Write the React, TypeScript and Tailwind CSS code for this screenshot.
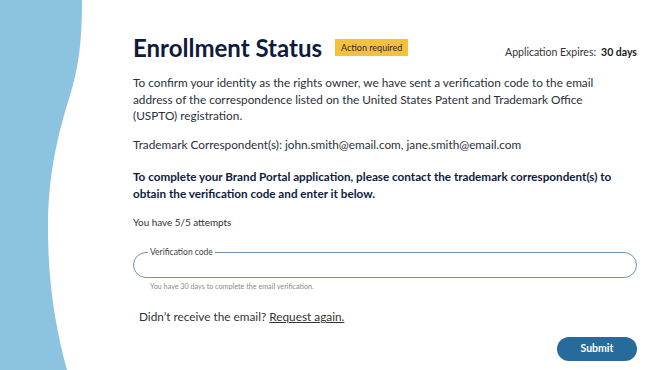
import React from "react";

export default function App() {
  return (
    <div
      className="flex h-[370px] w-[661px] overflow-hidden bg-white text-[#2b2f3a]"
      style={{ fontFamily: "Lato, 'Open Sans', sans-serif" }}
    >
      <svg width="90" height="370" viewBox="0 0 90 370" className="shrink-0">
        <path
          d="M0 0 H82 C82 40 79 65 71 92 C62 122 48 165 48 228 C48 285 56 330 67 370 H0 Z"
          fill="#8cc3e0"
        />
      </svg>
      <main className="flex flex-1 flex-col pl-[43px] pr-[24px] pt-[33px]">
        <div className="flex items-end justify-between">
          <div className="flex items-center gap-[13px]">
            <h1 className="text-[24px] font-bold leading-[30px] text-[#0f1b3d]">Enrollment Status</h1>
            <span className="mb-[2px] bg-[#f4c13f] px-[6px] py-[3px] text-[9px] leading-[11px] text-[#2a2a2a]">
              Action required
            </span>
          </div>
          <div className="mb-[2px] text-[10.5px] text-[#333]">
            Application Expires:<span className="ml-[5px] font-bold text-[#1a1a1a]">30 days</span>
          </div>
        </div>
        <p className="mt-[12px] max-w-[495px] text-[11.8px] leading-[16.5px]">
          To confirm your identity as the rights owner, we have sent a verification code to the email address of the correspondence listed on the United States Patent and Trademark Office (USPTO) registration.
        </p>
        <p className="mt-[12px] text-[11.8px] leading-[16.5px]">
          Trademark Correspondent(s): john.smith@email.com, jane.smith@email.com
        </p>
        <p className="mt-[15px] text-[11.7px] font-bold leading-[16.5px] text-[#0f1b3d]">
          To complete your Brand Portal application, please contact the trademark correspondent(s) to obtain the verification code and enter it below.
        </p>
        <p className="mt-[14px] text-[9.9px] leading-[14px]">You have 5/5 attempts</p>
        <fieldset className="mt-[18px] h-[31px] rounded-full border border-[#6f93ae] px-[14px]">
          <legend className="px-[2px] text-[8.5px] leading-[10px] text-[#444]">Verification code</legend>
        </fieldset>
        <p className="mt-[4px] pl-[17px] text-[7.2px] leading-[10px] text-[#8a8a8a]">
          You have 30 days to complete the email verification.
        </p>
        <p className="mt-[17px] pl-[6px] text-[11.8px] leading-[16px] text-[#333]">
          Didn’t receive the email?{" "}
          <a className="underline" href="#">Request again.</a>
        </p>
        <div className="mt-[12px] flex justify-end">
          <button className="h-[24px] w-[80px] rounded-full bg-[#276a9c] text-[10.5px] font-bold text-white">
            Submit
          </button>
        </div>
      </main>
    </div>
  );
}
